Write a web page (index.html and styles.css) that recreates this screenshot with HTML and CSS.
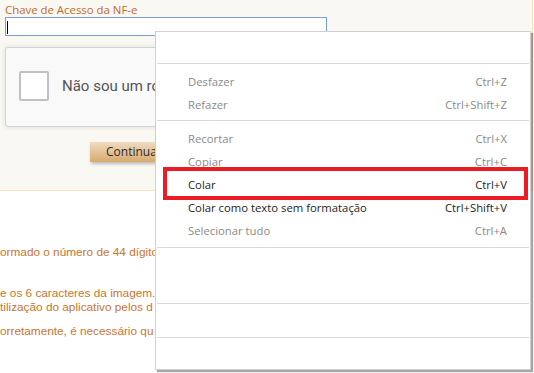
FILE: index.html
```html
<!DOCTYPE html>
<html lang="pt-BR">
<head>
    <meta charset="UTF-8">
    <title>Consulta NF-e</title>
    <link rel="stylesheet" href="styles.css">
</head>
<body>
    <div class="panel">
        <label class="field-label">Chave de Acesso da NF-e</label>
        <div class="key-input"><span class="caret"></span></div>

        <div class="captcha">
            <span class="check"></span>
            <span class="captcha-text">Não sou um robô</span>
        </div>

        <div class="actions">
            <button class="continue">Continuar</button>
        </div>
    </div>

    <div class="help">
        <p class="first">ormado o número de 44 dígitos</p>
        <p>e os 6 caracteres da imagem.<br>tilização do aplicativo pelos d</p>
        <p>orretamente, é necessário qu</p>
    </div>

    <!-- context menu -->
    <div class="menu">
        <div class="blank top"></div>
        <div class="sep"></div>
        <div class="group">
            <div class="item off"><span>Desfazer</span><span>Ctrl+Z</span></div>
            <div class="item off"><span>Refazer</span><span>Ctrl+Shift+Z</span></div>
        </div>
        <div class="sep"></div>
        <div class="group last">
            <div class="item off"><span>Recortar</span><span>Ctrl+X</span></div>
            <div class="item off"><span>Copiar</span><span>Ctrl+C</span></div>
            <div class="item"><span>Colar</span><span>Ctrl+V</span></div>
            <div class="item"><span>Colar como texto sem formatação</span><span>Ctrl+Shift+V</span></div>
            <div class="item off"><span>Selecionar tudo</span><span>Ctrl+A</span></div>
        </div>
        <div class="sep"></div>
        <div class="blank mid"></div>
        <div class="sep"></div>
        <div class="blank mid2"></div>
        <div class="sep"></div>
    </div>

    <div class="highlight"></div>
</body>
</html>
```

FILE: styles.css
```css
html, * {
    box-sizing: border-box;
    margin: 0;
    padding: 0;
}

body {
    width: 534px;
    height: 373px;
    overflow: hidden;
    background: #fff;
    font-family: 'Open Sans', sans-serif;
    position: relative;
}

.panel {
    width: 533px;
    height: 191px;
    padding: 3px 0 0 5px;
    background: #f9f8f3;
    border-right: 1px solid #fbe2bc;
    border-bottom: 1px solid #fbe2bc;
}

.field-label {
    display: block;
    font-size: 11.4px;
    line-height: 14px;
    color: #c3692a;
}

.key-input {
    width: 322px;
    height: 19px;
    background: #fff;
    border: 1px solid #7a9edb;
    padding: 3px 0 0 1px;
}

.caret {
    display: block;
    width: 1px;
    height: 13px;
    background: #000;
}

.captcha {
    width: 304px;
    height: 80px;
    margin-top: 11px;
    display: flex;
    align-items: center;
    padding: 0 0 3px 13px;
    background: #f9f9f9;
    border: 1px solid #d3d3d3;
    border-radius: 3px;
    box-shadow: 0 0 4px 1px rgba(0, 0, 0, 0.08);
}

.check {
    width: 30px;
    height: 30px;
    background: #fff;
    border: 2px solid #c1c1c1;
    border-radius: 2px;
}

.captcha-text {
    margin-left: 13px;
    font-family: Roboto, sans-serif;
    font-size: 15px;
    color: #555;
}

.actions {
    margin-top: 12px;
    padding-left: 85px;
}

.continue {
    height: 20px;
    padding: 0 16px;
    border: none;
    font-family: 'Open Sans', sans-serif;
    font-size: 12px;
    color: #2b2b2b;
    background: linear-gradient(#efdcc2, #d9a86f);
    box-shadow: 1px 2px 3px rgba(0, 0, 0, 0.25);
}

.help {
    padding-top: 54px;
    font-family: 'Liberation Sans', Arial, sans-serif;
    font-size: 11.8px;
    line-height: 14px;
    color: #c9752e;
}

.help p {
    margin-bottom: 10px;
}

.help p.first {
    margin-bottom: 27px;
}

.menu {
    position: absolute;
    left: 155px;
    top: 31px;
    width: 376px;
    height: 339px;
    background: #fff;
    border: 1px solid #d0d0d0;
    box-shadow: 2px 2px 1px rgba(0, 0, 0, 0.35);
    font-family: 'Open Sans', sans-serif;
    font-size: 11.3px;
}

.blank.top { height: 31px; }
.blank.mid { height: 55px; }
.blank.mid2 { height: 33px; }

.sep {
    height: 1px;
    margin: 0 1px;
    background: #d9d9d9;
}

.group {
    padding: 6px 0 4px;
}

.group.last {
    padding-bottom: 5px;
}

.item {
    height: 23px;
    display: flex;
    align-items: center;
    justify-content: space-between;
    padding: 0 23px 0 32px;
    color: #1e1e1e;
}

.item.off {
    color: #8a8a8a;
}

.highlight {
    position: absolute;
    left: 163px;
    top: 167px;
    width: 365px;
    height: 33px;
    border: 4px solid #ed1c24;
}
```
